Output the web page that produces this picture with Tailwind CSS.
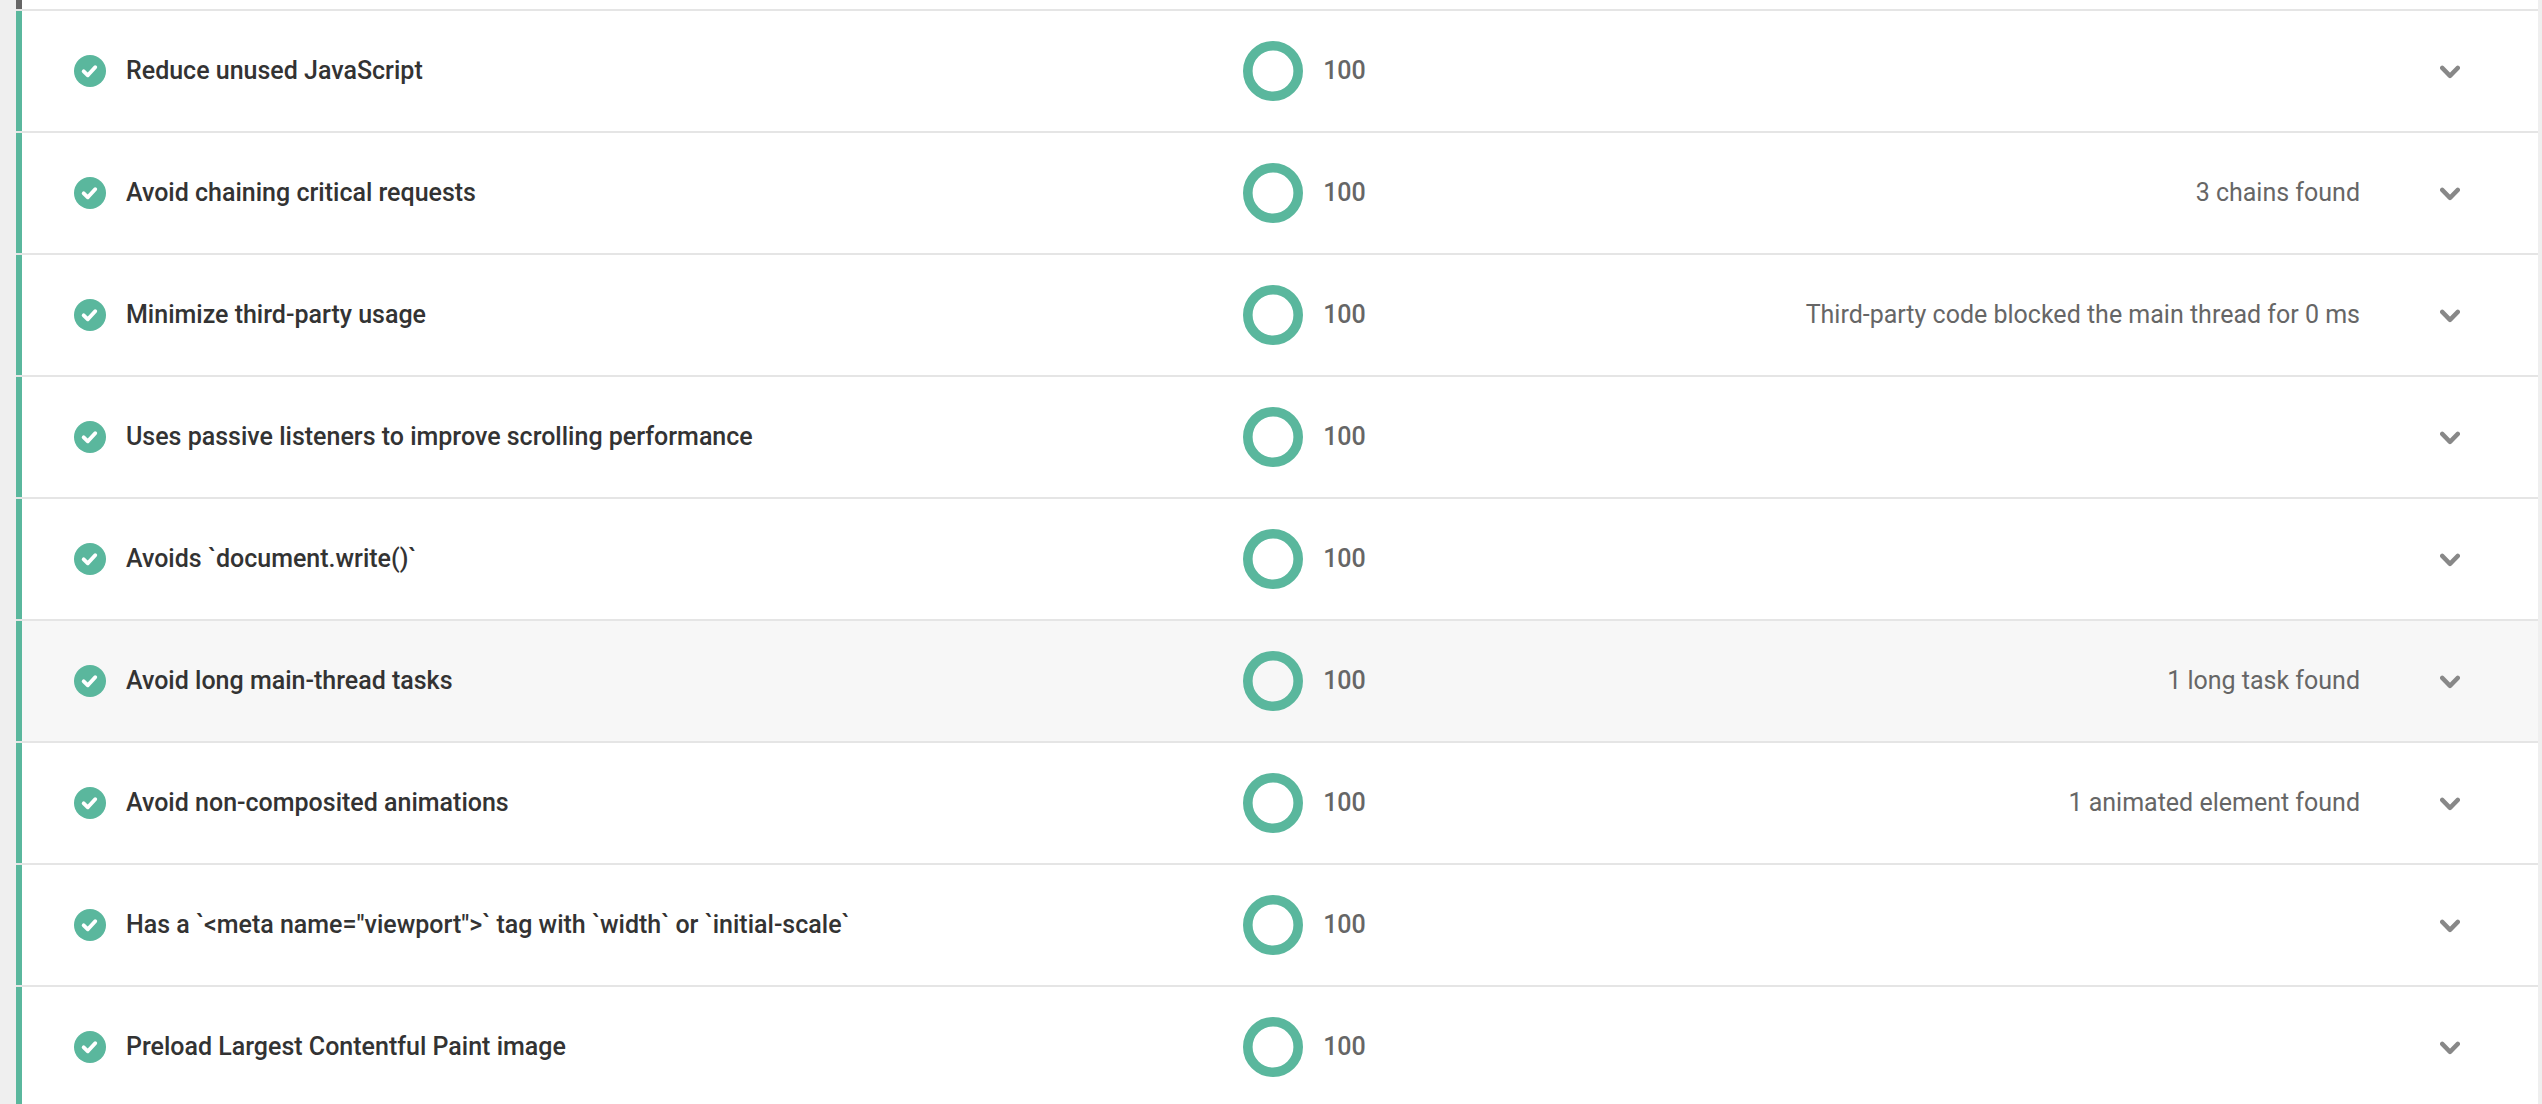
<!DOCTYPE html>
<html lang="en">
<head>
    <meta charset="UTF-8">
    <meta name="viewport" content="width=device-width, initial-scale=1.0">
    <script src="https://cdn.jsdelivr.net/npm/@tailwindcss/browser@4"></script>
    <title>Performance Audits</title>
</head>
<body class="bg-[#efefef] font-['Roboto',sans-serif]">
    <main class="h-screen overflow-hidden pl-4 pr-1">
        <!-- bottom edge of the previous audit -->
        <div class="h-[9px] bg-white border-l-6 border-[#666]"></div>
        <ul id="audits"></ul>
    </main>

    <script>
        const audits = [
            { title: 'Reduce unused JavaScript', score: 100, note: '' },
            { title: 'Avoid chaining critical requests', score: 100, note: '3 chains found' },
            { title: 'Minimize third-party usage', score: 100, note: 'Third-party code blocked the main thread for 0 ms' },
            { title: 'Uses passive listeners to improve scrolling performance', score: 100, note: '' },
            { title: 'Avoids `document.write()`', score: 100, note: '' },
            { title: 'Avoid long main-thread tasks', score: 100, note: '1 long task found', active: true },
            { title: 'Avoid non-composited animations', score: 100, note: '1 animated element found' },
            { title: 'Has a `&lt;meta name="viewport"&gt;` tag with `width` or `initial-scale`', score: 100, note: '' },
            { title: 'Preload Largest Contentful Paint image', score: 100, note: '' },
        ];

        document.getElementById('audits').innerHTML = audits.map((audit, index) => `
            <li class="border-t-2 border-[#e5e5e5]">
                <div class="flex items-center h-[120px] border-l-6 border-[#5ab79d] pl-[52px] pr-[78px] text-[25px] leading-8 ${audit.active ? 'bg-[#f7f7f7]' : 'bg-white'}">
                    <div class="flex items-center gap-5 w-[49%] shrink-0">
                        <svg class="size-8 shrink-0" viewBox="0 0 32 32" fill="none" aria-hidden="true">
                            <circle cx="16" cy="16" r="16" fill="#5ab79d"/>
                            <path d="M9.7 16.4L13.8 20.3L21.2 12.2" stroke="#fff" stroke-width="3.9" stroke-linecap="round" stroke-linejoin="round"/>
                        </svg>
                        <h3 id="audit-${index}" class="font-medium text-[#333]">${audit.title}</h3>
                    </div>
                    <div class="flex items-center gap-5 shrink-0">
                        <svg class="size-15" viewBox="0 0 60 60" fill="none" aria-hidden="true">
                            <circle cx="30" cy="30" r="25.2" stroke="#5ab79d" stroke-width="9.6"/>
                        </svg>
                        <span class="font-medium text-[#666]">${audit.score}</span>
                    </div>
                    <p class="flex-1 text-right text-[#666]">${audit.note}</p>
                    <button type="button" class="ml-20 shrink-0 cursor-pointer" aria-label="Show details" aria-describedby="audit-${index}">
                        <svg class="block size-5" viewBox="0 0 20 20" fill="none" aria-hidden="true">
                            <path d="M2.2 6.9l7.8 8 7.8-8" stroke="#888" stroke-width="4.4" stroke-linecap="round" stroke-linejoin="round"/>
                        </svg>
                    </button>
                </div>
            </li>
        `).join('');
    </script>
</body>
</html>
